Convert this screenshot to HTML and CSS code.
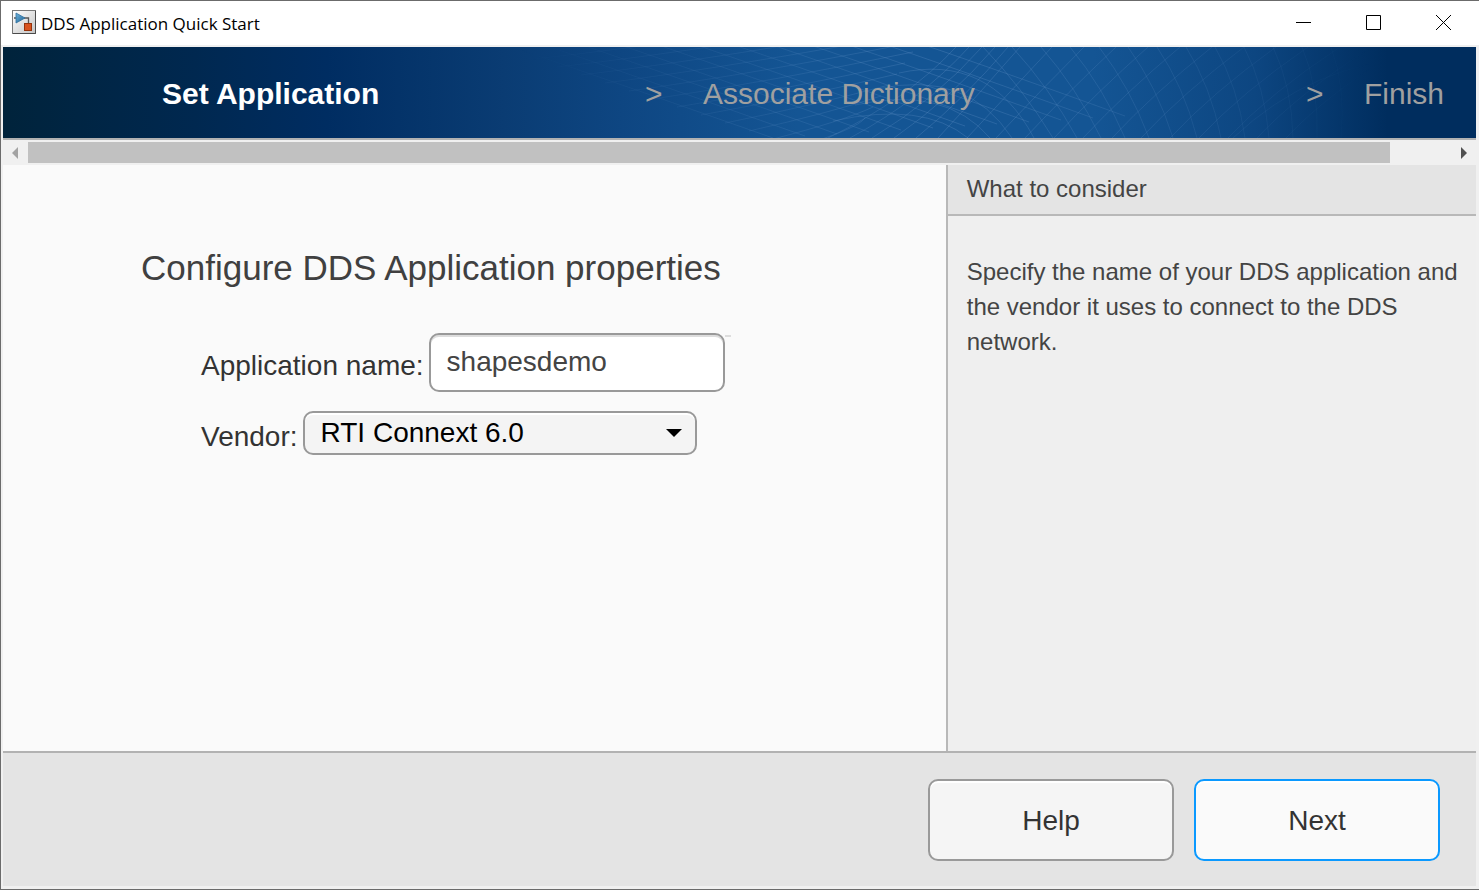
FILE: index.html
```html
<!DOCTYPE html>
<html lang="en">
<head>
    <meta charset="UTF-8">
    <meta name="viewport" content="width=device-width, initial-scale=1.0">
    <title>DDS Application Quick Start</title>
    <link rel="stylesheet" href="styles.css">
</head>
<body>
    <div class="window">
        <header class="titlebar">
            <svg class="app-icon" viewBox="0 0 24 24" aria-hidden="true">
                <defs>
                    <linearGradient id="icon-bg" x1="0" y1="0" x2="1" y2="1">
                        <stop offset="0" stop-color="#ffffff"/>
                        <stop offset="1" stop-color="#c4c4c4"/>
                    </linearGradient>
                    <linearGradient id="icon-tri" x1="0" y1="0" x2="1" y2="1">
                        <stop offset="0" stop-color="#6fb4dc"/>
                        <stop offset="1" stop-color="#1b5f91"/>
                    </linearGradient>
                </defs>
                <rect x="0.5" y="0.5" width="23" height="23" fill="url(#icon-bg)" stroke="#777"/>
                <path d="M23.5 1v22.5H1" fill="none" stroke="#4a4a4a"/>
                <path d="M2 8h2M12 8h4.5v6" fill="none" stroke="#555" stroke-width="1.3"/>
                <path d="M4 3l9 5L4 13z" fill="url(#icon-tri)" stroke="#2d6f9e" stroke-width="0.8"/>
                <rect x="12.5" y="13.5" width="7" height="7" fill="#d9531e" stroke="#96330c"/>
            </svg>
            <span class="title">DDS Application Quick Start</span>
            <div class="window-controls">
                <button type="button" aria-label="Minimize">
                    <svg viewBox="0 0 15 15"><path d="M0 7.5h15"/></svg>
                </button>
                <button type="button" aria-label="Maximize">
                    <svg viewBox="0 0 15 15"><path d="M0.5 0.5h14v14h-14z"/></svg>
                </button>
                <button type="button" aria-label="Close">
                    <svg viewBox="0 0 15 15"><path d="M0 0l15 15M15 0L0 15"/></svg>
                </button>
            </div>
        </header>

        <div class="content">
            <nav class="banner">
                <svg class="mesh" viewBox="0 0 1473 91" preserveAspectRatio="none" aria-hidden="true">
                    <defs>
                        <linearGradient id="fade" gradientUnits="userSpaceOnUse" x1="0" y1="0" x2="1473" y2="0">
                            <stop offset="0.35" stop-color="#000"/>
                            <stop offset="0.5" stop-color="#777"/>
                            <stop offset="0.64" stop-color="#fff"/>
                            <stop offset="0.78" stop-color="#999"/>
                            <stop offset="0.93" stop-color="#000"/>
                        </linearGradient>
                        <mask id="mesh-mask" maskUnits="userSpaceOnUse" x="0" y="0" width="1473" height="91">
                            <rect width="1473" height="91" fill="url(#fade)"/>
                        </mask>
                    </defs>
                    <g mask="url(#mesh-mask)"><path id="mesh-lines"/></g>
                </svg>
                <ol class="steps">
                    <li class="step current">Set Application <span class="arrow">&gt;</span></li>
                    <li class="step">Associate Dictionary <span class="arrow">&gt;</span></li>
                    <li class="step">Finish</li>
                </ol>
            </nav>

            <div class="scrollbar">
                <svg class="scroll-left" viewBox="0 0 6 12"><path d="M6 0v12L0 6z"/></svg>
                <div class="track"><div class="thumb"></div></div>
                <svg class="scroll-right" viewBox="0 0 6 12"><path d="M0 0v12l6-6z"/></svg>
            </div>

            <div class="main">
                <form class="settings">
                    <h1>Configure DDS Application properties</h1>
                    <div class="field">
                        <label for="app-name">Application name:</label>
                        <div class="text-wrap">
                            <input type="text" id="app-name" value="shapesdemo">
                        </div>
                    </div>
                    <div class="field">
                        <label for="vendor">Vendor:</label>
                        <div class="select-wrap">
                            <select id="vendor">
                                <option>RTI Connext 6.0</option>
                            </select>
                            <svg viewBox="0 0 16 8" aria-hidden="true"><path d="M0 0h16L8 8z"/></svg>
                        </div>
                    </div>
                </form>
                <aside class="info">
                    <h2>What to consider</h2>
                    <p>Specify the name of your DDS application and the vendor it uses to connect to the DDS network.</p>
                </aside>
            </div>

            <footer class="footer">
                <button type="button" class="btn">Help</button>
                <button type="button" class="btn primary">Next</button>
            </footer>
        </div>
    </div>

    <script>
        const lines = [];

        // shallow net on the left side
        for (let i = 0; i < 12; i++) {
            const x = 480 + i * 38;
            lines.push(`M${x} -10Q${x + 100} 24 ${x + 290 - i * 6} ${91 - i * 2}`);
        }
        for (let i = 0; i < 12; i++) {
            lines.push(`M${530 + i * 24} ${12 + i * 8}Q${700 + i * 14} ${-6 + i * 8} ${950 - i * 8} ${-50 + i * 11}`);
        }

        // bundle of curves between the two nets
        for (let i = 0; i < 5; i++) {
            lines.push(`M${825 + i * 22} 91Q${905 + i * 14} 52 ${953 + i * 13} 0`);
        }

        // rounded crests that run down into the diamonds
        for (let i = 0; i < 4; i++) {
            const x = 860 + i * 22;
            const y = 66 - i * 16;
            lines.push(`M${x - 30} ${y + 8}Q${x + 60} ${y - 12} ${x + 105} 91`);
        }

        // wide diamonds on the right side
        for (let i = 0; i < 13; i++) {
            const x = 935 + i * 29;
            lines.push(`M${x} 91Q${x + 42} 46 ${x + 82 + i * 3} 0`);
            lines.push(`M${x + 45} 0Q${x + 84 - i * 2} 40 ${x + 115 - i * 5} 91`);
        }
        lines.push('M1230 91Q1310 15 1420 10');

        document.getElementById('mesh-lines').setAttribute('d', lines.join(''));
    </script>
</body>
</html>
```
FILE: styles.css
```css
* {
    box-sizing: border-box;
}
body {
    margin: 0;
    font-family: "Liberation Sans", Arial, sans-serif;
    color: #333;
}
.window {
    display: flex;
    flex-direction: column;
    min-height: 100vh;
    background-color: #f0f0f0;
    border: 1px solid #6b6b6b;
    border-right: none;
}
.titlebar {
    display: flex;
    align-items: center;
    height: 44px;
    padding: 0 1px 2px 11px;
    background-color: white;
}
.app-icon {
    width: 24px;
    height: 24px;
    margin-right: 5px;
}
.title {
    padding-top: 2px;
    font-family: "Open Sans", sans-serif;
    font-size: 17px;
    color: #000;
}
.window-controls {
    display: flex;
    margin-left: auto;
}
.window-controls button {
    width: 70px;
    height: 42px;
    padding: 0;
    background: none;
    border: none;
}
.window-controls svg {
    display: block;
    width: 15px;
    height: 15px;
    margin: auto;
    fill: none;
    stroke: #000;
}
.content {
    flex: 1;
    display: flex;
    flex-direction: column;
    margin: 2px 3px 3px 2px;
}
.banner {
    position: relative;
    height: 93px;
    border-bottom: 2px solid #b2b2b2;
    background: linear-gradient(to right, #00233b 0%, #002850 13%, #002d62 22%, #0a3c73 34%, #0e4682 42%, #145594 54%, #145594 74%, #0d4681 85%, #002d5e 94%);
}
.mesh {
    position: absolute;
    width: 100%;
    height: 100%;
}
.mesh path {
    fill: none;
    stroke: #6f9bd0;
    stroke-opacity: 0.27;
}
.steps {
    position: relative;
    display: grid;
    grid-template-columns: 642fr 661fr 170fr;
    align-items: center;
    height: 100%;
    margin: 0;
    padding: 3px 0 0;
    list-style: none;
}
.step {
    display: flex;
    padding-left: 58px;
    font-size: 30px;
    line-height: 36px;
    color: #a0a0a0;
    white-space: nowrap;
}
.step.current {
    padding-left: 159px;
    font-weight: bold;
    color: white;
}
.arrow {
    width: 0;
    margin-left: auto;
    font-weight: normal;
    color: #a0a0a0;
}
.scrollbar {
    display: flex;
    align-items: center;
    height: 25px;
    padding: 0 9px;
}
.scrollbar svg {
    width: 6px;
    height: 12px;
    fill: #a3a3a3;
}
.scrollbar .scroll-right {
    fill: #505050;
}
.track {
    flex: 1;
    margin: 0 14px 0 10px;
}
.thumb {
    width: 96%;
    height: 21px;
    background-color: #c1c1c1;
}
.main {
    flex: 1;
    display: grid;
    grid-template-columns: 64% 36%;
}
.settings {
    padding: 82px 20px 20px 138px;
    background-color: #fafafa;
}
h1 {
    margin: 0 0 44px;
    font-size: 35px;
    line-height: 42px;
    font-weight: normal;
    color: #404040;
}
.field {
    display: flex;
    align-items: center;
    gap: 5px;
    margin: 0 0 19px 60px;
    font-size: 28px;
}
.field label {
    padding-top: 7px;
}
.text-wrap, .select-wrap {
    position: relative;
}
/* the top highlight runs a little past the box */
.text-wrap::after {
    content: "";
    position: absolute;
    top: 2px;
    left: 100%;
    width: 6px;
    height: 2px;
    background-color: #ddd;
}
input, select {
    display: block;
    font-family: inherit;
    font-size: 28px;
    border: 2px solid #999;
    border-radius: 10px;
}
input {
    width: 296px;
    height: 59px;
    padding: 0 16px 2px;
    color: #444;
    background-color: white;
    box-shadow: inset 0 2px #ddd;
}
select {
    appearance: none;
    width: 394px;
    height: 44px;
    padding: 0 40px 2px 16px;
    color: #000;
    background-color: #f4f4f4;
    box-shadow: inset 0 2px white;
}
.select-wrap svg {
    position: absolute;
    top: 18px;
    right: 15px;
    width: 16px;
    height: 8px;
    pointer-events: none;
}
.info {
    border-left: 2px solid #b8b8b8;
    background-color: #efefef;
    color: #444;
    font-size: 24px;
}
.info h2 {
    margin: 0;
    padding: 6px 19px 7px;
    font-size: 24px;
    line-height: 36px;
    font-weight: normal;
    background-color: #e4e4e4;
    border-bottom: 2px solid #b8b8b8;
}
.info p {
    margin: 0;
    padding: 38px 12px 20px 19px;
    line-height: 35px;
}
.footer {
    display: flex;
    justify-content: flex-end;
    gap: 20px;
    padding: 26px 36px 25px;
    background-color: #e4e4e4;
    border-top: 2px solid #b2b2b2;
}
.btn {
    width: 246px;
    height: 82px;
    padding: 2px 0 0;
    font-family: inherit;
    font-size: 28px;
    color: #333;
    background-color: #f5f5f5;
    border: 2px solid #999;
    border-radius: 10px;
    box-shadow: inset 0 2px white;
}
.btn.primary {
    background-color: #fafafa;
    border-color: #0a99ff;
}
```
